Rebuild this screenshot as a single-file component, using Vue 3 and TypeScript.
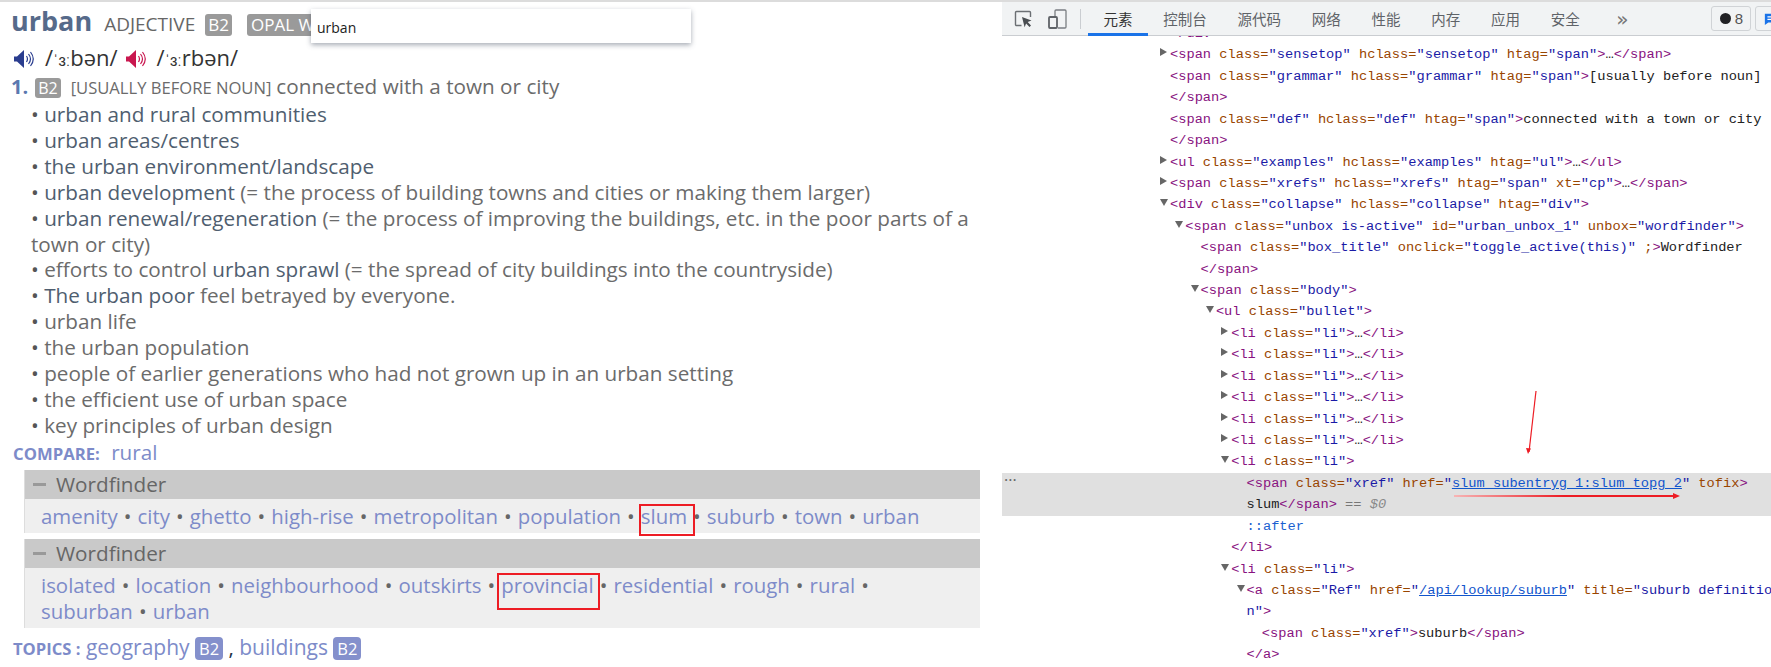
<script setup lang="ts">
type Tok = { t: string; c: string; u?: boolean }
type Row = { d: number; arrow?: 'r' | 'd'; hl?: boolean; toks: Tok[] }

const tag = (t: string): Tok => ({ t, c: 'tg' })
const an = (t: string): Tok => ({ t, c: 'an' })
const av = (t: string): Tok => ({ t, c: 'av' })
const tx = (t: string): Tok => ({ t, c: 'tx' })

const rows: Row[] = [
  { d: 0, toks: [tag('</div>')] },
  { d: 0, arrow: 'r', toks: [tag('<span '), an('class='), av('"sensetop"'), an(' hclass='), av('"sensetop"'), an(' htag='), av('"span"'), tag('>'), tx('…'), tag('</span>')] },
  { d: 0, toks: [tag('<span '), an('class='), av('"grammar"'), an(' hclass='), av('"grammar"'), an(' htag='), av('"span"'), tag('>'), tx('[usually before noun]')] },
  { d: 0, toks: [tag('</span>')] },
  { d: 0, toks: [tag('<span '), an('class='), av('"def"'), an(' hclass='), av('"def"'), an(' htag='), av('"span"'), tag('>'), tx('connected with a town or city')] },
  { d: 0, toks: [tag('</span>')] },
  { d: 0, arrow: 'r', toks: [tag('<ul '), an('class='), av('"examples"'), an(' hclass='), av('"examples"'), an(' htag='), av('"ul"'), tag('>'), tx('…'), tag('</ul>')] },
  { d: 0, arrow: 'r', toks: [tag('<span '), an('class='), av('"xrefs"'), an(' hclass='), av('"xrefs"'), an(' htag='), av('"span"'), an(' xt='), av('"cp"'), tag('>'), tx('…'), tag('</span>')] },
  { d: 0, arrow: 'd', toks: [tag('<div '), an('class='), av('"collapse"'), an(' hclass='), av('"collapse"'), an(' htag='), av('"div"'), tag('>')] },
  { d: 1, arrow: 'd', toks: [tag('<span '), an('class='), av('"unbox is-active"'), an(' id='), av('"urban_unbox_1"'), an(' unbox='), av('"wordfinder"'), tag('>')] },
  { d: 2, toks: [tag('<span '), an('class='), av('"box_title"'), an(' onclick='), av('"toggle_active(this)"'), an(' ;'), tag('>'), tx('Wordfinder')] },
  { d: 2, toks: [tag('</span>')] },
  { d: 2, arrow: 'd', toks: [tag('<span '), an('class='), av('"body"'), tag('>')] },
  { d: 3, arrow: 'd', toks: [tag('<ul '), an('class='), av('"bullet"'), tag('>')] },
  ...Array.from({ length: 6 }, (): Row => ({ d: 4, arrow: 'r', toks: [tag('<li '), an('class='), av('"li"'), tag('>'), tx('…'), tag('</li>')] })),
  { d: 4, arrow: 'd', toks: [tag('<li '), an('class='), av('"li"'), tag('>')] },
  { d: 5, hl: true, toks: [tag('<span '), an('class='), av('"xref"'), an(' href='), av('"'), { t: 'slum_subentryg_1:slum_topg_2', c: 'lk', u: true }, av('"'), an(' tofix'), tag('>')] },
  { d: 5, hl: true, toks: [tx('slum'), tag('</span>'), { t: ' == ', c: 'eq' }, { t: '$0', c: 'dl' }] },
  { d: 5, toks: [{ t: '::after', c: 'ps' }] },
  { d: 4, toks: [tag('</li>')] },
  { d: 4, arrow: 'd', toks: [tag('<li '), an('class='), av('"li"'), tag('>')] },
  { d: 5, arrow: 'd', toks: [tag('<a '), an('class='), av('"Ref"'), an(' href='), av('"'), { t: '/api/lookup/suburb', c: 'lk', u: true }, av('"'), an(' title='), av('"suburb definitio')] },
  { d: 5, toks: [av('n"'), tag('>')] },
  { d: 6, toks: [tag('<span '), an('class='), av('"xref"'), tag('>'), tx('suburb'), tag('</span>')] },
  { d: 5, toks: [tag('</a>')] },
]

const tabs = ['元素', '控制台', '源代码', '网络', '性能', '内存', '应用', '安全']

const examples: { strong: string; rest?: string }[] = [
  { strong: 'urban and rural communities' },
  { strong: 'urban areas/centres' },
  { strong: 'the urban environment/landscape' },
  { strong: 'urban development', rest: ' (= the process of building towns and cities or making them larger)' },
  { strong: 'urban renewal/regeneration', rest: ' (= the process of improving the buildings, etc. in the poor parts of a town or city)' },
]
const moreExamples = [
  'urban life',
  'the urban population',
  'people of earlier generations who had not grown up in an urban setting',
  'the efficient use of urban space',
  'key principles of urban design',
]
const box1 = ['amenity', 'city', 'ghetto', 'high-rise', 'metropolitan', 'population', 'slum', 'suburb', 'town', 'urban']
const box2 = ['isolated', 'location', 'neighbourhood', 'outskirts', 'provincial', 'residential', 'rough', 'rural', 'suburban', 'urban']
</script>

<template>
  <div class="page">
    <main class="entry">
      <div class="head">
        <span class="hw">urban</span>
        <span class="pos">ADJECTIVE</span>
        <span class="lvl">B2</span>
        <span class="opal">OPAL W</span>
      </div>
      <div class="pron">
        <svg class="spk" viewBox="0 0 20 18"><path d="M0 6.500h3L10 0v18l-7-6.500H0z" fill="#2a3d8f"/><path d="M12.500 6c1.300 2 1.300 4 0 6M14.500 4c2.400 3 2.400 7 0 10M16.500 2c3.400 4.300 3.400 9.700 0 14" fill="none" stroke="#2a3d8f" stroke-width="1.200"/></svg>
        <span class="ph">/<small>ˈɜː</small>bən/</span>
        <svg class="spk" viewBox="0 0 20 18"><path d="M0 6.500h3L10 0v18l-7-6.500H0z" fill="#c9174f"/><path d="M12.500 6c1.300 2 1.300 4 0 6M14.500 4c2.400 3 2.400 7 0 10M16.500 2c3.400 4.300 3.400 9.700 0 14" fill="none" stroke="#c9174f" stroke-width="1.200"/></svg>
        <span class="ph">/<small>ˈɜː</small>rbən/</span>
      </div>
      <div class="sense">
        <span class="num">1.</span>
        <span class="lvl sm">B2</span>
        <span class="gram">[USUALLY BEFORE NOUN]</span>
        <span class="def">connected with a town or city</span>
      </div>
      <ul class="ex">
        <li v-for="e in examples" :key="e.strong"><span class="dot">•</span> <span class="cf">{{ e.strong }}</span>{{ e.rest }}</li>
        <li>
          <span class="dot">•</span> efforts to control <span class="cf">urban sprawl</span> (= the spread of city buildings into the countryside)
        </li>
        <li><span class="dot">•</span> <span class="cf">The urban poor</span> feel betrayed by everyone.</li>
        <li v-for="e in moreExamples" :key="e"><span class="dot">•</span> {{ e }}</li>
      </ul>
      <div class="compare"><b>COMPARE:</b> <a>rural</a></div>
      <section class="box first">
        <h4><i></i>Wordfinder</h4>
        <p>
          <template v-for="(w, i) in box1" :key="w">
            <a :class="{ red: w === 'slum' }">{{ w }}</a><span v-if="i < box1.length - 1" class="sep"> • </span>
          </template>
        </p>
      </section>
      <section class="box second">
        <h4><i></i>Wordfinder</h4>
        <p>
          <template v-for="(w, i) in box2" :key="w">
            <a :class="{ red2: w === 'provincial' }">{{ w }}</a><span v-if="i < box2.length - 1" class="sep"> • </span>
          </template>
        </p>
      </section>
      <div class="topics">
        <b>TOPICS :</b> <a>geography</a> <span class="tag">B2</span> <span class="comma">,</span> <a>buildings</a> <span class="tag">B2</span>
      </div>
      <div class="find">urban</div>
    </main>

    <aside class="devtools">
      <header class="bar">
        <svg class="tool" width="20" height="20" viewBox="0 0 20 20"><path d="M8.500 16.500H3.500a1 1 0 0 1-1-1V3.500a1 1 0 0 1 1-1h13a1 1 0 0 1 1 1V8" fill="none" stroke="#6b6f73" stroke-width="1.400"/><path d="M9 8l9.500 3.500-3.800 1.500 3.300 3.400-1.500 1.500-3.400-3.400-1.500 3.800z" fill="#4a4e52"/></svg>
        <svg class="tool" width="20" height="20" viewBox="0 0 20 20"><path d="M8 7V2a1 1 0 0 1 1-1h9a1 1 0 0 1 1 1v16a1 1 0 0 1-1 1h-7" fill="none" stroke="#7a7e82" stroke-width="1.300"/><rect x="2" y="8" width="8" height="11" rx="1" fill="none" stroke="#5f6368" stroke-width="1.800"/></svg>
        <span class="div"></span>
        <nav class="tabs">
          <span v-for="(t, i) in tabs" :key="t" class="tab" :class="{ on: i === 0 }">{{ t }}</span>
        </nav>
        <span class="more">»</span>
        <span class="pill"><i></i>8</span>
        <span class="pill2"><svg width="14" height="14" viewBox="0 0 14 14"><path d="M1 1h13v10H5l-4 3z" fill="#1a73e8"/><path d="M4 4.500h8M4 7.500h8" stroke="#fff" stroke-width="1.300"/></svg></span>
      </header>
      <div class="dom">
        <div v-for="(r, i) in rows" :key="i" class="row" :class="{ hl: r.hl }" :style="{ paddingLeft: 168 + r.d * 15.3 + 'px' }">
          <span v-if="r.hl && r.toks[0].c === 'tg'" class="dots">•••</span>
          <i v-if="r.arrow" class="tri" :class="r.arrow"></i>
          <span v-for="(k, j) in r.toks" :key="j" :class="[k.c, { u: k.u }]">{{ k.t }}</span>
        </div>
      </div>
      <svg class="marks" viewBox="0 0 769 665" width="769" height="665">
        <path d="M534 389L527 450" stroke="#ed1c24" stroke-width="1.200" fill="none"/>
        <path d="M526 452l-2-6 5 .6z" fill="#ed1c24"/>
        <defs><linearGradient id="fade" x1="0" x2="1" y1="0" y2="0"><stop offset="0" stop-color="#f7b5b5"/><stop offset=".5" stop-color="#ed1c24"/></linearGradient></defs>
        <rect x="452" y="493" width="220" height="2" fill="url(#fade)"/>
        <path d="M678 494l-7-3v6z" fill="#ed1c24"/>
      </svg>
    </aside>
  </div>
</template>

<style>
html, body { margin: 0; background: #fff; }
</style>

<style scoped>
.page {
  width: 1771px;
  height: 667px;
  display: flex;
  overflow: hidden;
  box-sizing: border-box;
  border-top: 2px solid #dcdcdc;
  background: #fff;
}
.entry {
  position: relative;
  width: 1002px;
  flex: none;
  box-sizing: border-box;
  padding: 0 22px 0 11px;
  font: 20.700px/25.900px "Open Sans", sans-serif;
  color: #6b6b6b;
}
.head { display: flex; align-items: baseline; height: 38px; }
.hw { font-size: 27px; line-height: 38px; font-weight: 700; color: #566a8a; }
.pos { margin-left: 12px; font-size: 19px; color: #666; }
.lvl {
  margin-left: 10px;
  padding: 0 3px;
  border-radius: 3px;
  background: #9a9a9a;
  color: #fff;
  font-size: 17px;
  line-height: 22px;
}
.opal {
  margin-left: 15px;
  padding: 0 4px;
  border-radius: 3px;
  background: #9a9a9a;
  color: #fff;
  font-size: 17px;
  line-height: 22px;
  white-space: nowrap;
}
.pron { display: flex; align-items: center; height: 30px; padding-left: 3px; margin-top: 4px; margin-bottom: -1px; }
.spk { width: 20px; height: 18px; margin-right: 11px; }
.ph { font-size: 22px; color: #333; margin-right: 8px; }
.ph small { font-size: 16px; }
.sense { display: flex; align-items: baseline; height: 28px; margin-top: 1px; }
.num { font-weight: 700; color: #5b78b0; font-size: 20px; }
.lvl.sm { margin-left: 7px; font-size: 16px; line-height: 20px; padding: 0 3px; }
.gram { margin-left: 10px; font-size: 16.600px; }
.def { margin-left: 5px; }
.ex { list-style: none; margin: 0; padding: 0 0 0 20px; }
.cf { color: #4f5e6f; }
.dot { color: #555; }
.compare { height: 26px; line-height: 26px; padding-left: 2px; }
.compare b { font-size: 16.700px; color: #7d8bc9; font-weight: 700; margin-right: 6px; }
a { color: #7d8bc9; }
.box { margin: 0 0 0 13px; background: #efefef; border-left: 1px solid #ddd; }
.box.first { margin-top: 5px; height: 63px; }
.box.second { margin-top: 6px; height: 89px; }
.box h4 {
  margin: 0;
  height: 29px;
  display: flex;
  align-items: center;
  background: #c9c9c9;
  font: 400 20.700px/29px "Open Sans", sans-serif;
  color: #666;
}
.box h4 i { width: 13px; height: 3px; margin: 0 10px 0 8px; background: #999; }
.box p { margin: 0; padding: 4px 30px 0 16px; line-height: 26px; font-size: 20.400px; }
.sep { color: #666; margin: 0 .75px; }
.red, .red2 { position: relative; }
.red::after, .red2::after {
  content: "";
  position: absolute;
  top: 2px;
  box-sizing: border-box;
  border: 2px solid #ed1c24;
}
.red::after { left: -2px; right: -8px; height: 32px; }
.red2::after { left: -4px; right: -6px; height: 37px; }
.topics { margin-top: 4px; padding-left: 2px; line-height: 30px; height: 30px; color: #7d8bc9; }
.topics b { font-size: 16.600px; font-weight: 700; }
.topics a { font-size: 21px; }
.tag {
  display: inline-block;
  padding: 0 4px;
  border-radius: 4px;
  background: #8490cc;
  color: #fff;
  font-size: 16.500px;
  line-height: 23px;
}
.comma { color: #234; }
.find {
  position: absolute;
  left: 311px;
  top: 7px;
  width: 380px;
  height: 34px;
  box-sizing: border-box;
  padding-left: 6px;
  background: #fff;
  box-shadow: 0 2px 5px rgba(60, 70, 90, .45);
  font: 14px/38px "Open Sans", sans-serif;
  color: #222;
}
.devtools { position: relative; flex: 1; min-width: 0; overflow: hidden; }
.bar {
  position: relative;
  z-index: 1;
  display: flex;
  align-items: center;
  height: 34px;
  box-sizing: border-box;
  background: #f1f3f4;
  border-bottom: 1px solid #cacdd1;
}
.tool { margin-left: 11px; flex: none; }
.tool + .tool { margin-left: 14px; }
.div { width: 1px; height: 20px; background: #cacdd1; margin: 0 7px 0 13px; flex: none; }
.tabs { display: flex; height: 34px; }
.tab {
  padding: 0 15.400px;
  font: 14.500px/33px "Noto Sans CJK SC", sans-serif;
  color: #5f6368;
}
.tab.on { color: #333; box-shadow: inset 0 -3px 0 #1a73e8; }
.more { margin-left: 21px; font: 20px/30px "DejaVu Sans", sans-serif; color: #777; }
.pill {
  margin-left: auto;
  flex: none;
  display: flex;
  align-items: center;
  gap: 4px;
  height: 25px;
  box-sizing: border-box;
  padding: 0 7px 0 8px;
  border: 1px solid #d0d3d6;
  border-radius: 3px;
  font: 15px "Liberation Sans", sans-serif;
  color: #555;
}
.pill i { width: 11px; height: 11px; border-radius: 50%; background: #202124; }
.pill2 {
  margin-left: 4px;
  margin-right: -14px;
  flex: none;
  display: flex;
  align-items: center;
  box-sizing: border-box;
  width: 30px;
  padding: 0 8px;
  height: 25px;
  border: 1px solid #d0d3d6;
  border-radius: 3px;
}
.dom { margin-top: -13px; font: 13.700px/21.430px "Liberation Mono", monospace; white-space: pre; }
.row { position: relative; height: 21.430px; }
.row.hl { background: #e0e0e0; }
.dots { position: absolute; left: 2px; top: -3px; font-size: 7px; color: #666; letter-spacing: 0; }
.tri { position: absolute; margin-left: -10px; margin-top: 4px; width: 0; height: 0; }
.tri.r { border-left: 7px solid #666; border-top: 4.500px solid transparent; border-bottom: 4.500px solid transparent; }
.tri.d { margin-top: 5px; border-top: 7px solid #666; border-left: 4.500px solid transparent; border-right: 4.500px solid transparent; }
.tg { color: #881280; }
.an { color: #994500; }
.av { color: #1a1aa6; }
.tx { color: #222; }
.lk { color: #1155cc; }
.u { text-decoration: underline; }
.eq { color: #777; }
.dl { color: #888; font-style: italic; }
.ps { color: #1a5fd0; }
.marks { position: absolute; left: 0; top: 0; z-index: 2; pointer-events: none; }
</style>
